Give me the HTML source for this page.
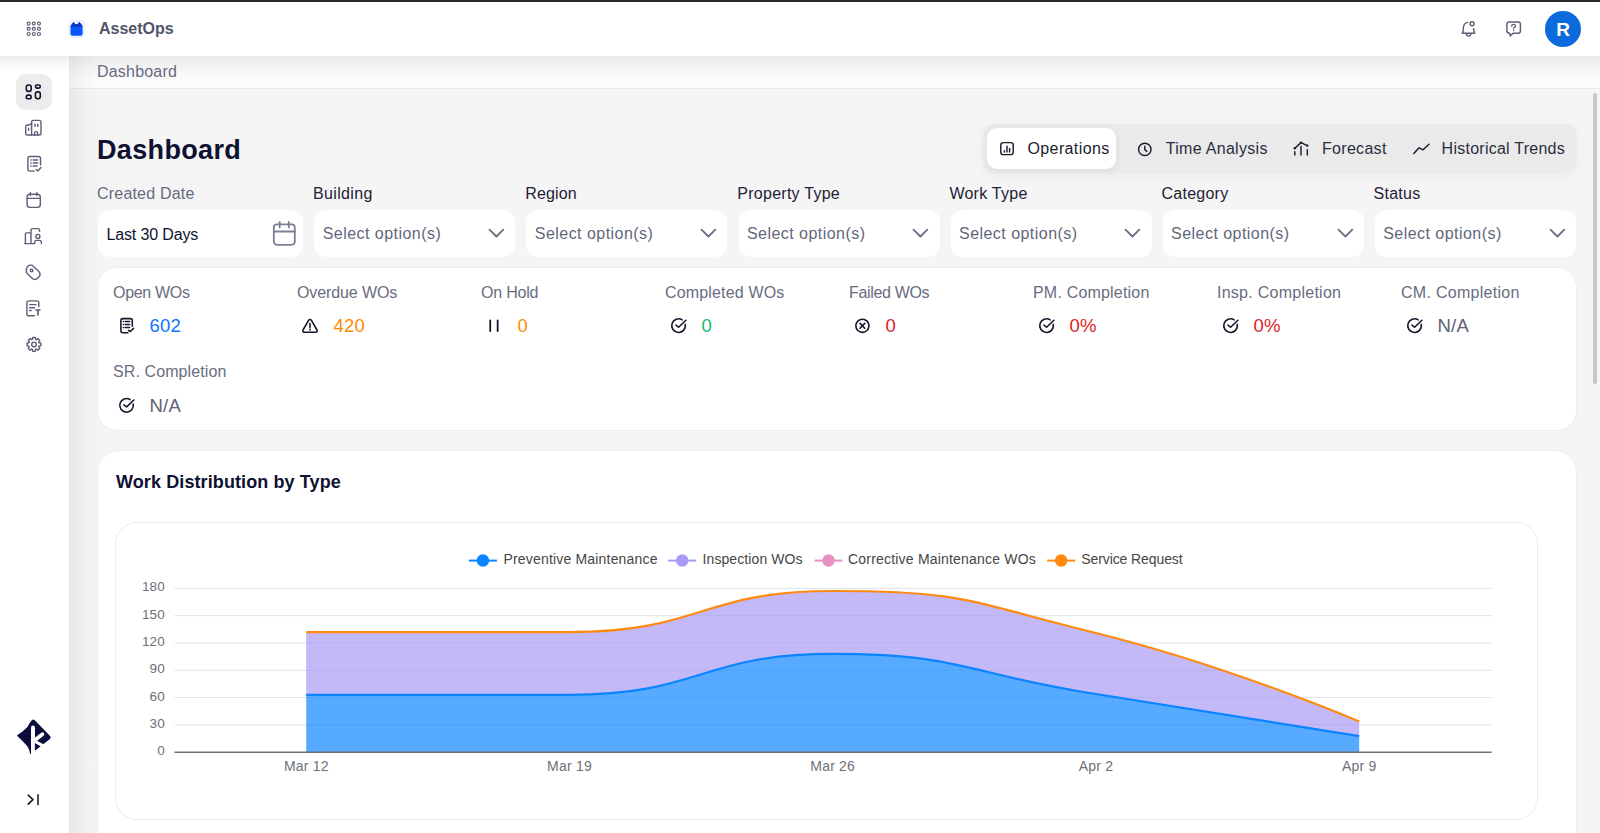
<!DOCTYPE html>
<html><head><meta charset="utf-8">
<style>
*{box-sizing:border-box;margin:0;padding:0}
html,body{width:1600px;height:833px;overflow:hidden;background:#f5f5f5;font-family:"Liberation Sans",sans-serif;color:#1a1c2e}
.a{position:absolute}
.t{position:absolute;white-space:nowrap;line-height:1}
svg{position:absolute;overflow:visible}
.lbl{font-size:16px;color:#676c80}
.inp{position:absolute;top:209.5px;height:47.5px;background:#fff;border-radius:12px}
.ph{font-size:16px;color:#62677a;top:226.3px}
.kl{font-size:16px;color:#686d80}
.kv{font-size:18.5px}
</style></head><body>
<div class="a" style="left:0;top:0;width:1600px;height:2px;background:#2a2a2a"></div>
<div class="a" style="left:0;top:2px;width:1600px;height:54px;background:#fff"></div>
<div class="a" style="left:0;top:56px;width:69px;height:777px;background:#fff"></div>
<div class="a" style="left:69px;top:56px;width:1531px;height:33px;background:linear-gradient(#eaeaea,#f1f1f1 25%,#f7f7f7 50%,#fbfbfb 75%,#fdfdfd);border-bottom:1px solid #e9e9e9"></div>
<div class="a" style="left:69px;top:56px;width:30px;height:777px;background:linear-gradient(to right,rgba(0,0,0,0.055),rgba(0,0,0,0.015) 60%,rgba(0,0,0,0))"></div>
<div class="a" style="left:0;top:56px;width:69px;height:18px;background:linear-gradient(rgba(0,0,0,0.07),rgba(0,0,0,0.02) 50%,rgba(0,0,0,0))"></div>
<div class="a" style="left:1593.2px;top:92.5px;width:4px;height:291.5px;background:#c6c6cc;border-radius:2px"></div>
<!-- header -->
<svg style="left:0;top:0" width="100" height="56" viewBox="0 0 100 56" fill="none" stroke="#5a5f73" stroke-width="1.15">
<circle cx="28.6" cy="23.6" r="1.5"/><circle cx="33.8" cy="23.6" r="1.5"/><circle cx="39" cy="23.6" r="1.5"/>
<circle cx="28.6" cy="28.8" r="1.5"/><circle cx="33.8" cy="28.8" r="1.5"/><circle cx="39" cy="28.8" r="1.5"/>
<circle cx="28.6" cy="34" r="1.5"/><circle cx="33.8" cy="34" r="1.5"/><circle cx="39" cy="34" r="1.5"/>
</svg>
<div class="a" style="left:68px;top:20px;width:17px;height:17.5px;background:#eef1fd;border-radius:5px"></div>
<svg style="left:0;top:0" width="100" height="56" viewBox="0 0 100 56">
<path d="M71.6 24.6 L73.7 22 L75.2 24.2 L77.7 24.2 L79.2 22 L81.4 24.6 Q82.6 25.6 82.6 27.4 L82.6 33.2 Q82.6 35.8 80 35.8 L73.1 35.8 Q70.5 35.8 70.5 33.2 L70.5 27.4 Q70.5 25.6 71.6 24.6Z" fill="#0a57fb"/>
<path d="M71.6 24.6 L73.7 22 L75.2 24.2 L77.7 24.2 L79.2 22 L81.4 24.6 Q82.4 25.4 82.6 26.8 L70.5 26.8 Q70.7 25.4 71.6 24.6Z" fill="#0b36c4"/>
</svg>
<div class="t" style="left:99px;top:20.5px;font-size:16px;font-weight:bold;color:#50556a">AssetOps</div>

<svg style="left:0;top:0" width="1600" height="56" viewBox="0 0 1600 56" fill="none" stroke="#5c6077" stroke-width="1.45" stroke-linecap="round" stroke-linejoin="round">
<path d="M1467.6 22.4 Q1463.5 23.3 1463.3 28.2 L1463.2 30.9 Q1463.1 31.9 1462.4 32.4 Q1461.8 33.1 1462.8 33.2 L1474.2 33.2 Q1475.2 33.1 1474.6 32.4 Q1473.9 31.9 1473.8 30.8 L1473.7 28.8"/>
<path d="M1466.3 33.5 Q1466.5 36.1 1468.6 36.1 Q1470.7 36.1 1470.9 33.5"/>
<circle cx="1472.1" cy="23.8" r="2"/>
<path d="M1509 21.9 L1518.2 21.9 Q1520.4 21.9 1520.4 24.1 L1520.4 31.1 Q1520.4 33.3 1518.2 33.3 L1513.1 33.3 L1510.3 35.9 L1509.6 33.3 Q1506.9 33.3 1506.9 31.1 L1506.9 24.1 Q1506.9 21.9 1509 21.9 Z"/>
<path d="M1511.7 26.2 Q1511.7 24.4 1513.6 24.4 Q1515.4 24.4 1515.4 26 Q1515.4 27.2 1513.7 27.8 L1513.6 28.8" stroke-width="1.3"/>
<circle cx="1513.6" cy="30.5" r="0.7" fill="#5c6077" stroke="none"/>
</svg>
<div class="a" style="left:1545px;top:11px;width:36px;height:36px;border-radius:50%;background:#0b6bdc"></div>
<div class="t" style="left:1545px;top:19.5px;width:36px;text-align:center;font-size:19px;font-weight:bold;color:#fff">R</div>

<div class="t" style="left:97px;top:63.5px;font-size:16px;letter-spacing:0.2px;color:#666a7e">Dashboard</div>
<!-- sidebar -->
<div class="a" style="left:16px;top:74px;width:36px;height:36px;border-radius:10px;background:#ececec"></div>
<svg style="left:0;top:0" width="69" height="833" viewBox="0 0 69 833" fill="none" stroke-linecap="round" stroke-linejoin="round">
<g stroke="#12152a" stroke-width="1.6">
<rect x="26.3" y="85" width="4.9" height="6.4" rx="2.2"/>
<rect x="35.4" y="85" width="4.9" height="3.1" rx="1.55"/>
<rect x="26.3" y="95.1" width="4.9" height="3.6" rx="1.8"/>
<rect x="35.4" y="91.9" width="4.9" height="6.8" rx="2.2"/>
</g>
<g stroke="#5c6077" stroke-width="1.4">
<!-- building -->
<path d="M31.6 135 L31.6 122.2 Q31.6 120.4 33.4 120.4 L39.2 120.4 Q41 120.4 41 122.2 L41 133.2 Q41 135 39.2 135 Z"/>
<path d="M31.6 124.2 L30.4 124.2 Q29 124.2 28.4 125.2 L26.6 125.2 Q25.7 125.2 25.7 126.6 L25.7 133.4 Q25.7 135 27.2 135 L31.6 135"/>
<path d="M35 124.2 L35 126.4 M37.8 124.2 L37.8 126.4 M28.6 128.2 L28.6 130.2"/>
<path d="M34.6 135 L34.6 133 Q34.6 131.6 36.2 131.6 Q37.8 131.6 37.8 133 L37.8 135"/>
<!-- doc check -->
<path d="M40.5 165 L40.5 158.6 Q40.5 156.5 38.4 156.5 L29.8 156.5 Q27.9 156.5 27.9 158.6 L27.9 169 Q27.9 171.1 29.8 171.1 L34.2 171.1"/>
<path d="M30.8 160 L31.2 160 M33.2 160 L37.6 160 M30.8 163 L31.2 163 M33.2 163 L37.6 163 M30.8 166 L31.2 166 M33.2 166 L37 166"/>
<path d="M36.2 169.4 L37.8 170.9 L41 167.6"/>
<!-- calendar -->
<rect x="27.1" y="194.2" width="13.2" height="13.2" rx="2.8"/>
<path d="M27.1 198.4 L40.3 198.4 M30.4 192.6 L30.4 195.6 M36.9 192.6 L36.9 195.6"/>
<!-- building person -->
<path d="M24.6 243.6 L34 243.6 M25.4 243.6 L25.4 234.2 Q25.4 232.9 26.7 232.9 L31 232.9 M31 243.6 L31 230.2 Q31 228.6 32.6 228.6 L37.8 228.6 Q39.6 228.6 39.6 230.4 L39.6 231.6"/>
<circle cx="37.9" cy="236.4" r="2"/>
<path d="M34.6 243.6 L34.6 242.6 Q34.6 240.4 36.6 240.4 L39.4 240.4 Q41.4 240.4 41.4 242.6 L41.4 243.6"/>
<!-- tag -->
<path d="M27.6 266.4 Q29.6 264.6 32.4 265.4 L38.6 271.2 Q41.6 274.2 38.6 277.2 L37.8 278 Q34.8 281 31.8 278 L26.4 272.4 Q25.6 269 27.6 266.4Z"/>
<circle cx="31.6" cy="270.6" r="1.3"/>
<!-- doc T -->
<path d="M38.8 306.6 L38.8 302.8 Q38.8 300.9 36.9 300.9 L28.8 300.9 Q26.9 300.9 26.9 302.8 L26.9 313.9 Q26.9 315.8 28.8 315.8 L34.4 315.8"/>
<path d="M29.6 304.6 L36 304.6 M29.6 307.7 L34.6 307.7 M29.6 310.5 L31.2 310.5"/>
<path d="M35.5 310 L40.5 310 M38 310 L38 315.4" stroke-width="1.7" stroke-linecap="butt"/>
<!-- gear -->
<path d="M31.97 339.50 L32.45 339.33 L32.66 337.53 L35.34 337.53 L35.55 339.33 L36.03 339.50 L36.49 339.72 L37.91 338.60 L39.80 340.49 L38.68 341.91 L38.90 342.37 L39.07 342.85 L40.87 343.06 L40.87 345.74 L39.07 345.95 L38.90 346.43 L38.68 346.89 L39.80 348.31 L37.91 350.20 L36.49 349.08 L36.03 349.30 L35.55 349.47 L35.34 351.27 L32.66 351.27 L32.45 349.47 L31.97 349.30 L31.51 349.08 L30.09 350.20 L28.20 348.31 L29.32 346.89 L29.10 346.43 L28.93 345.95 L27.13 345.74 L27.13 343.06 L28.93 342.85 L29.10 342.37 L29.32 341.91 L28.20 340.49 L30.09 338.60 L31.51 339.72 Z"/>
<circle cx="34" cy="344.4" r="2.3"/>
<!-- collapse -->
<path d="M28.2 795.2 L33 799.6 L28.2 804.2" stroke="#1c1f33" stroke-width="1.6"/>
<path d="M38 794.8 L38 804.6" stroke="#1c1f33" stroke-width="1.6"/>
</g>
<!-- logo k -->
<path d="M31.6 720.4 Q33 718.8 34.8 720.2 L49.6 735.4 Q51.8 737.6 49.4 739.4 L30.2 754.2 Q29.4 748.4 25.8 744.6 Q22.2 740.4 16.8 735.4 Q23.4 731.6 27.4 727 Q29.4 722.8 31.6 720.4 Z" fill="#0b0e3d"/>
<path d="M33 727.6 L33 757" stroke="#fff" stroke-width="4" stroke-linecap="round"/>
<path d="M34.4 740.6 L42.4 734.2" stroke="#fff" stroke-width="3.8" stroke-linecap="round"/>
<path d="M35.2 741.6 L46 747.4" stroke="#fff" stroke-width="3.2" stroke-linecap="butt"/>
<path d="M34.9 743.2 L39.8 746.4 L34.9 750.6 Z" fill="#0b0e3d"/>
</svg>

<!-- title -->
<div class="t" style="left:97px;top:136.8px;font-size:27px;font-weight:bold;letter-spacing:0.35px;color:#0e1130">Dashboard</div>

<!-- tabs -->
<div class="a" style="left:982.5px;top:124px;width:594px;height:48.5px;border-radius:12px;background:#eaeaea;box-shadow:0 3px 14px rgba(0,0,0,0.045)"></div>
<div class="a" style="left:987px;top:127.8px;width:129px;height:41.2px;border-radius:10px;background:#fff;box-shadow:0 3px 10px rgba(0,0,0,0.05)"></div>
<svg style="left:0;top:0" width="1600" height="200" viewBox="0 0 1600 200" fill="none" stroke-linecap="round" stroke-linejoin="round">
<g stroke="#1a1d30" stroke-width="1.45">
<rect x="1000.8" y="142.6" width="12.4" height="12" rx="2.4"/>
<path d="M1004.4 152 L1004.4 150.6 M1007 152 L1007 146.2 M1009.6 152 L1009.6 148.4"/>
<circle cx="1144.8" cy="149.4" r="6.2"/>
<path d="M1144.8 146.2 L1144.8 149.6 L1146.8 151.4"/>
<path d="M1294.8 155 L1294.8 151.6 M1301 155 L1301 146.4 M1307.3 155 L1307.3 149.6"/>
<path d="M1294.8 148.2 L1301 142.6 L1307.3 145.6"/>
<path d="M1413.8 153.6 L1419 147.8 L1423 149.8 L1429 144.2"/>
</g>
<g fill="#1a1d30"><circle cx="1294.8" cy="148.2" r="1.2"/><circle cx="1301" cy="142.6" r="1.2"/><circle cx="1307.3" cy="145.6" r="1.2"/></g>
</svg>
<div class="t" style="left:1027.5px;top:141px;font-size:16px;letter-spacing:0.38px;color:#1a1d30">Operations</div>
<div class="t" style="left:1165.7px;top:141px;font-size:16px;letter-spacing:0.3px;color:#2a2d40">Time Analysis</div>
<div class="t" style="left:1322px;top:141px;font-size:16px;letter-spacing:0.3px;color:#2a2d40">Forecast</div>
<div class="t" style="left:1441.6px;top:141px;font-size:16px;letter-spacing:0.25px;color:#2a2d40">Historical Trends</div>

<!-- filters -->
<div class="t lbl" style="left:97px;top:186.3px;letter-spacing:0.2px">Created Date</div>
<div class="inp" style="left:98px;width:205px"></div>
<div class="t" style="left:106.5px;top:226.8px;font-size:16px;letter-spacing:-0.15px;color:#0f1230">Last 30 Days</div>
<svg style="left:272px;top:219.5px" width="25" height="27" viewBox="0 0 25 27" fill="none" stroke="#7b8094" stroke-width="1.8" stroke-linecap="round"><rect x="1.8" y="4.4" width="21" height="20.4" rx="3.2"/><path d="M1.8 11.5 L22.8 11.5 M7.7 1.8 L7.7 7.4 M16.8 1.8 L16.8 7.4"/></svg>
<div class="t lbl" style="left:313.1px;top:186.3px;color:#1f2235;letter-spacing:0.33px">Building</div>
<div class="inp" style="left:314.3px;width:201px"></div>
<div class="t ph" style="left:322.7px;letter-spacing:0.46px">Select option(s)</div>
<svg style="left:488.1px;top:226px" width="18" height="13" viewBox="0 0 18 13" fill="none" stroke="#6a6f83" stroke-width="1.8" stroke-linecap="round" stroke-linejoin="round"><path d="M1.5 3.6 L8.4 10.5 L15.3 3.6"/></svg>
<div class="t lbl" style="left:525.2px;top:186.3px;color:#1f2235;letter-spacing:0.15px">Region</div>
<div class="inp" style="left:526.4px;width:201px"></div>
<div class="t ph" style="left:534.8px;letter-spacing:0.46px">Select option(s)</div>
<svg style="left:700.2px;top:226px" width="18" height="13" viewBox="0 0 18 13" fill="none" stroke="#6a6f83" stroke-width="1.8" stroke-linecap="round" stroke-linejoin="round"><path d="M1.5 3.6 L8.4 10.5 L15.3 3.6"/></svg>
<div class="t lbl" style="left:737.3px;top:186.3px;color:#1f2235;letter-spacing:0.26px">Property Type</div>
<div class="inp" style="left:738.5px;width:201px"></div>
<div class="t ph" style="left:746.9px;letter-spacing:0.46px">Select option(s)</div>
<svg style="left:912.3px;top:226px" width="18" height="13" viewBox="0 0 18 13" fill="none" stroke="#6a6f83" stroke-width="1.8" stroke-linecap="round" stroke-linejoin="round"><path d="M1.5 3.6 L8.4 10.5 L15.3 3.6"/></svg>
<div class="t lbl" style="left:949.4px;top:186.3px;color:#1f2235;letter-spacing:0.25px">Work Type</div>
<div class="inp" style="left:950.6px;width:201px"></div>
<div class="t ph" style="left:959.0px;letter-spacing:0.46px">Select option(s)</div>
<svg style="left:1124.4px;top:226px" width="18" height="13" viewBox="0 0 18 13" fill="none" stroke="#6a6f83" stroke-width="1.8" stroke-linecap="round" stroke-linejoin="round"><path d="M1.5 3.6 L8.4 10.5 L15.3 3.6"/></svg>
<div class="t lbl" style="left:1161.5px;top:186.3px;color:#1f2235;letter-spacing:0.25px">Category</div>
<div class="inp" style="left:1162.7px;width:201px"></div>
<div class="t ph" style="left:1171.1px;letter-spacing:0.46px">Select option(s)</div>
<svg style="left:1336.5px;top:226px" width="18" height="13" viewBox="0 0 18 13" fill="none" stroke="#6a6f83" stroke-width="1.8" stroke-linecap="round" stroke-linejoin="round"><path d="M1.5 3.6 L8.4 10.5 L15.3 3.6"/></svg>
<div class="t lbl" style="left:1373.6px;top:186.3px;color:#1f2235;letter-spacing:0.25px">Status</div>
<div class="inp" style="left:1374.8px;width:201px"></div>
<div class="t ph" style="left:1383.2px;letter-spacing:0.46px">Select option(s)</div>
<svg style="left:1548.6px;top:226px" width="18" height="13" viewBox="0 0 18 13" fill="none" stroke="#6a6f83" stroke-width="1.8" stroke-linecap="round" stroke-linejoin="round"><path d="M1.5 3.6 L8.4 10.5 L15.3 3.6"/></svg>
<div class="a" style="left:97.3px;top:267.3px;width:1480px;height:163.9px;border-radius:20px;background:#fff;border:1px solid #eeeeee"></div>
<svg style="left:0;top:0" width="1600" height="440" viewBox="0 0 1600 440">
<g transform="translate(113,0)" stroke="#12152a" stroke-width="1.55" fill="none" stroke-linecap="round" stroke-linejoin="round"><path d="M19.3 326.2 L19.3 320.6 Q19.3 318.6 17.3 318.6 L9.9 318.6 Q7.9 318.6 7.9 320.6 L7.9 330.8 Q7.9 332.8 9.9 332.8 L14.9 332.8"/><path d="M10.4 321.4 L10.5 321.4 M12.3 321.4 L16.6 321.4 M10.4 324.5 L10.5 324.5 M12.3 324.5 L16.6 324.5 M10.4 327.5 L10.5 327.5 M12.3 327.5 L16.6 327.5"/><path d="M15.5 330.4 L17.2 331.5 L20.6 328.4"/></g>
<g transform="translate(297,0)" stroke="#12152a" stroke-width="1.55" fill="none" stroke-linecap="round" stroke-linejoin="round"><path d="M13 319.4 Q13.8 319.4 14.3 320.2 L20 330 Q20.6 332.2 18.8 332.2 L7.2 332.2 Q5.4 332.2 6 330 L11.7 320.2 Q12.2 319.4 13 319.4Z"/><path d="M13 323.4 L13 327.4"/><circle cx="13" cy="329.6" r="0.3" fill="#12152a"/></g>
<g transform="translate(481,0)" stroke="#12152a" stroke-width="1.8" stroke-linecap="round"><path d="M9.25 320.5 L9.25 331 M16.65 320.5 L16.65 331"/></g>
<g transform="translate(665,0)" stroke="#12152a" stroke-width="1.55" fill="none" stroke-linecap="round" stroke-linejoin="round"><path d="M20.235 324.35 A6.8 6.8 0 1 1 17.163 319.883"/><path d="M10.9 325.2 L13.6 327.2 L20.9 320.3"/></g>
<g transform="translate(849,0)" stroke="#12152a" stroke-width="1.55" fill="none" stroke-linecap="round" stroke-linejoin="round"><circle cx="13.4" cy="325.8" r="6.55"/><path d="M11 323.4 L15.8 328.2 M15.8 323.4 L11 328.2"/></g>
<g transform="translate(1033,0)" stroke="#12152a" stroke-width="1.55" fill="none" stroke-linecap="round" stroke-linejoin="round"><path d="M20.235 324.35 A6.8 6.8 0 1 1 17.163 319.883"/><path d="M10.9 325.2 L13.6 327.2 L20.9 320.3"/></g>
<g transform="translate(1217,0)" stroke="#12152a" stroke-width="1.55" fill="none" stroke-linecap="round" stroke-linejoin="round"><path d="M20.235 324.35 A6.8 6.8 0 1 1 17.163 319.883"/><path d="M10.9 325.2 L13.6 327.2 L20.9 320.3"/></g>
<g transform="translate(1401,0)" stroke="#12152a" stroke-width="1.55" fill="none" stroke-linecap="round" stroke-linejoin="round"><path d="M20.235 324.35 A6.8 6.8 0 1 1 17.163 319.883"/><path d="M10.9 325.2 L13.6 327.2 L20.9 320.3"/></g>
<g transform="translate(113,79.7)" stroke="#12152a" stroke-width="1.55" fill="none" stroke-linecap="round" stroke-linejoin="round"><path d="M20.235 324.35 A6.8 6.8 0 1 1 17.163 319.883"/><path d="M10.9 325.2 L13.6 327.2 L20.9 320.3"/></g>
</svg>
<div class="t kl" style="left:113px;top:284.6px;letter-spacing:-0.32px">Open WOs</div>
<div class="t kv" style="left:149.5px;top:317.2px;letter-spacing:0.2px;color:#0b74fb">602</div>
<div class="t kl" style="left:297px;top:284.6px;letter-spacing:-0.1px">Overdue WOs</div>
<div class="t kv" style="left:333.5px;top:317.2px;letter-spacing:0.2px;color:#ff8a00">420</div>
<div class="t kl" style="left:481px;top:284.6px;letter-spacing:-0.2px">On Hold</div>
<div class="t kv" style="left:517.5px;top:317.2px;letter-spacing:0.2px;color:#ff8c00">0</div>
<div class="t kl" style="left:665px;top:284.6px;letter-spacing:0.16px">Completed WOs</div>
<div class="t kv" style="left:701.5px;top:317.2px;letter-spacing:0.2px;color:#14bb6c">0</div>
<div class="t kl" style="left:849px;top:284.6px;letter-spacing:-0.33px">Failed WOs</div>
<div class="t kv" style="left:885.5px;top:317.2px;letter-spacing:0.2px;color:#e01b24">0</div>
<div class="t kl" style="left:1033px;top:284.6px;letter-spacing:0.19px">PM. Completion</div>
<div class="t kv" style="left:1069.5px;top:317.2px;letter-spacing:0.2px;color:#e01b24">0%</div>
<div class="t kl" style="left:1217px;top:284.6px;letter-spacing:0.26px">Insp. Completion</div>
<div class="t kv" style="left:1253.5px;top:317.2px;letter-spacing:0.2px;color:#e01b24">0%</div>
<div class="t kl" style="left:1401px;top:284.6px;letter-spacing:0.28px">CM. Completion</div>
<div class="t kv" style="left:1437.5px;top:317.2px;letter-spacing:0.2px;color:#5d6173">N/A</div>
<div class="t kl" style="left:113px;top:364.3px;letter-spacing:0.1px">SR. Completion</div>
<div class="t kv" style="left:149.5px;top:396.9px;letter-spacing:0.2px;color:#5d6173">N/A</div>
<div class="a" style="left:97.3px;top:450.3px;width:1480px;height:420px;border-radius:22px;background:#fff;border:1px solid #eeeeee"></div>
<div class="t" style="left:116px;top:472.9px;font-size:18px;font-weight:bold;letter-spacing:0.1px;color:#0e1130">Work Distribution by Type</div>
<div class="a" style="left:114.5px;top:522px;width:1423.5px;height:298px;border-radius:22px;background:#fff;border:1px solid #ececec"></div>
<svg style="left:0;top:0" width="1600" height="833" viewBox="0 0 1600 833">
<line x1="174.5" y1="588.4" x2="1491.6" y2="588.4" stroke="#dfe2ea" stroke-width="1"/>
<line x1="174.5" y1="615.7" x2="1491.6" y2="615.7" stroke="#dfe2ea" stroke-width="1"/>
<line x1="174.5" y1="643.0" x2="1491.6" y2="643.0" stroke="#dfe2ea" stroke-width="1"/>
<line x1="174.5" y1="670.3" x2="1491.6" y2="670.3" stroke="#dfe2ea" stroke-width="1"/>
<line x1="174.5" y1="697.6" x2="1491.6" y2="697.6" stroke="#dfe2ea" stroke-width="1"/>
<line x1="174.5" y1="724.9" x2="1491.6" y2="724.9" stroke="#dfe2ea" stroke-width="1"/>
<path d="M306.20 694.80 C306.20 694.80 438.59 694.80 569.40 694.80 C701.79 694.80 700.97 653.90 832.60 653.90 C964.17 653.90 964.28 673.45 1095.80 694.00 C1227.58 714.60 1359.20 736.20 1359.20 736.20 L1359.2 752.2 L306.2 752.2 Z" fill="#0a84ff" fill-opacity="0.69"/>
<path d="M306.20 632.10 C306.20 632.10 438.59 632.10 569.40 632.10 C701.79 632.10 701.03 591.00 832.60 591.00 C964.23 591.00 966.90 601.03 1095.80 633.00 C1230.20 666.33 1359.20 721.60 1359.20 721.60 L1359.2 736.20 C1359.20 736.20 1227.58 714.60 1095.80 694.00 C964.28 673.45 964.17 653.90 832.60 653.90 C700.97 653.90 701.79 694.80 569.40 694.80 C438.59 694.80 306.20 694.80 306.20 694.80 Z" fill="#a99bf7" fill-opacity="0.7"/>
<line x1="174.5" y1="752.2" x2="1491.6" y2="752.2" stroke="#6e7079" stroke-width="1.6"/>
<path d="M306.20 694.80 C306.20 694.80 438.59 694.80 569.40 694.80 C701.79 694.80 700.97 653.90 832.60 653.90 C964.17 653.90 964.28 673.45 1095.80 694.00 C1227.58 714.60 1359.20 736.20 1359.20 736.20" fill="none" stroke="#0a84ff" stroke-width="2.2" stroke-linejoin="round"/>
<path d="M306.20 632.10 C306.20 632.10 438.59 632.10 569.40 632.10 C701.79 632.10 701.03 591.00 832.60 591.00 C964.23 591.00 966.90 601.03 1095.80 633.00 C1230.20 666.33 1359.20 721.60 1359.20 721.60" fill="none" stroke="#ff8a0f" stroke-width="2.2" stroke-linejoin="round"/>
<line x1="468.9" y1="560.6" x2="496.9" y2="560.6" stroke="#0a84ff" stroke-width="2"/>
<circle cx="482.9" cy="560.5" r="6.2" fill="#0a84ff"/>
<line x1="668.2" y1="560.6" x2="696.2" y2="560.6" stroke="#a99bf7" stroke-width="2"/>
<circle cx="682.2" cy="560.5" r="6.2" fill="#a99bf7"/>
<line x1="814.5" y1="560.6" x2="842.5" y2="560.6" stroke="#e991c3" stroke-width="2"/>
<circle cx="828.5" cy="560.5" r="6.2" fill="#e991c3"/>
<line x1="1047.2" y1="560.6" x2="1075.2" y2="560.6" stroke="#ff8a0f" stroke-width="2"/>
<circle cx="1061.2" cy="560.5" r="6.2" fill="#ff8a0f"/>
</svg>
<div class="t" style="left:503.5px;top:552.4px;font-size:14px;letter-spacing:0.18px;color:#464646">Preventive Maintenance</div>
<div class="t" style="left:702.5px;top:552.4px;font-size:14px;letter-spacing:0.1px;color:#464646">Inspection WOs</div>
<div class="t" style="left:848.0px;top:552.4px;font-size:14px;letter-spacing:0.2px;color:#464646">Corrective Maintenance WOs</div>
<div class="t" style="left:1081.3px;top:552.4px;font-size:14px;letter-spacing:-0.1px;color:#464646">Service Request</div>
<div class="t" style="left:115px;width:50px;text-align:right;top:580.48px;font-size:13.5px;letter-spacing:0.2px;color:#6e7079">180</div>
<div class="t" style="left:115px;width:50px;text-align:right;top:607.76px;font-size:13.5px;letter-spacing:0.2px;color:#6e7079">150</div>
<div class="t" style="left:115px;width:50px;text-align:right;top:635.04px;font-size:13.5px;letter-spacing:0.2px;color:#6e7079">120</div>
<div class="t" style="left:115px;width:50px;text-align:right;top:662.32px;font-size:13.5px;letter-spacing:0.2px;color:#6e7079">90</div>
<div class="t" style="left:115px;width:50px;text-align:right;top:689.60px;font-size:13.5px;letter-spacing:0.2px;color:#6e7079">60</div>
<div class="t" style="left:115px;width:50px;text-align:right;top:716.88px;font-size:13.5px;letter-spacing:0.2px;color:#6e7079">30</div>
<div class="t" style="left:115px;width:50px;text-align:right;top:744.16px;font-size:13.5px;letter-spacing:0.2px;color:#6e7079">0</div>
<div class="t" style="left:266.3px;width:80px;text-align:center;top:759.3px;font-size:14px;letter-spacing:0.2px;color:#6e7079">Mar 12</div>
<div class="t" style="left:529.5px;width:80px;text-align:center;top:759.3px;font-size:14px;letter-spacing:0.2px;color:#6e7079">Mar 19</div>
<div class="t" style="left:792.7px;width:80px;text-align:center;top:759.3px;font-size:14px;letter-spacing:0.2px;color:#6e7079">Mar 26</div>
<div class="t" style="left:1055.9px;width:80px;text-align:center;top:759.3px;font-size:14px;letter-spacing:0.2px;color:#6e7079">Apr 2</div>
<div class="t" style="left:1319.3px;width:80px;text-align:center;top:759.3px;font-size:14px;letter-spacing:0.2px;color:#6e7079">Apr 9</div>
</body></html>
